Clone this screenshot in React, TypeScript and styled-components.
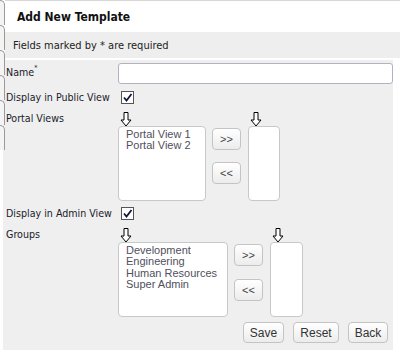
import React from "react";
import styled, { createGlobalStyle } from "styled-components";

const Global = createGlobalStyle`
  html, body { margin: 0; padding: 0; background: #fff; }
  body { font-family: "DejaVu Sans Condensed", "DejaVu Sans", sans-serif; }
`;

const Page = styled.div`
  position: relative;
  width: 400px;
  height: 353px;
  overflow: hidden;
  background: #fff;
`;

const TabStrip = styled.div`
  position: absolute;
  left: 0;
  top: 0;
  width: 5px;
  display: flex;
  flex-direction: column;
`;

const Tab = styled.div`
  width: 4px;
  height: 24px;
  border: 1px solid #9a9a9a;
  border-left: none;
  border-bottom: none;
  border-radius: 0 6px 0 0;
  background: #f4f4f4;
`;

const Header = styled.div`
  margin-left: 5px;
  height: 31px;
  border-top: 1px solid #d8d8d8;
  display: flex;
  align-items: center;
  padding-left: 12px;
  font-weight: bold;
  font-size: 12px;
  color: #111;
`;

const InfoBar = styled.div`
  margin-left: 5px;
  height: 26px;
  background: #eeeeee;
  display: flex;
  align-items: center;
  padding-left: 8px;
  font-size: 11px;
  color: #222;
`;

const Form = styled.div`
  margin: 2px 7px 0 3px;
  height: 290px;
  background: #efefef;
  display: flex;
  flex-direction: column;
  padding: 3px 0 0 3px;
  box-sizing: border-box;
`;

const Row = styled.div<{ $h: number }>`
  display: flex;
  align-items: flex-start;
  height: ${(p) => p.$h}px;
`;

const Label = styled.div<{ $top?: number }>`
  width: 112px;
  flex: none;
  font-size: 10.6px;
  color: #1a1a2a;
  padding-top: ${(p) => p.$top ?? 0}px;
`;

const Req = styled.sup`
  font-size: 7px;
  vertical-align: top;
  position: relative;
  top: -2px;
`;

const TextInput = styled.input`
  width: 275px;
  height: 21px;
  box-sizing: border-box;
  border: 1px solid #b4b1c0;
  border-radius: 3px;
  background: #fff;
  outline: none;
`;

const Check = styled.div`
  width: 11px;
  height: 11px;
  margin-left: 3px;
  border: 1px solid #555;
  background: #fff;
  display: flex;
  align-items: center;
  justify-content: center;
`;

const Picker = styled.div`
  display: flex;
  align-items: flex-start;
`;

const Column = styled.div`
  display: flex;
  flex-direction: column;
`;

const ArrowWrap = styled.div`
  height: 14px;
  padding-left: 2px;
  display: flex;
`;

const ListBox = styled.div<{ $w: number }>`
  width: ${(p) => p.$w}px;
  height: 75px;
  box-sizing: border-box;
  border: 1px solid #c8c8c8;
  border-radius: 4px;
  background: #fff;
  padding: 2px 7px;
  font-family: "Liberation Sans", Arial, sans-serif;
  font-size: 11px;
  line-height: 11.3px;
  color: #50505c;
`;

const MoveButtons = styled.div<{ $gap: number }>`
  display: flex;
  flex-direction: column;
  gap: ${(p) => p.$gap}px;
  margin: 16px 7px 0 6px;
`;

const Btn = styled.button<{ $w?: number }>`
  width: ${(p) => p.$w ?? 29}px;
  height: 22px;
  box-sizing: border-box;
  padding: 0;
  border: 1px solid #c4c4c4;
  border-radius: 4px;
  background: linear-gradient(#ffffff, #ececec);
  font-family: "Liberation Sans", Arial, sans-serif;
  font-size: 11px;
  color: #444;
`;

const Actions = styled.div`
  display: flex;
  justify-content: flex-end;
  gap: 9px;
  padding-right: 5px;
`;

const ActionBtn = styled(Btn)`
  height: 21px;
  font-size: 12px;
  color: #333;
`;

const Arrow = () => (
  <svg width="12" height="15" viewBox="0 0 12 15">
    <polygon
      points="4,0.5 8,0.5 8,8 11,8 6,14 1,8 4,8"
      fill="#fff"
      stroke="#000"
      strokeWidth="1"
    />
  </svg>
);

const Tick = () => (
  <svg width="11" height="11" viewBox="0 0 11 11">
    <path d="M2 5.5 L4.5 8.5 L9.5 2" fill="none" stroke="#10183a" strokeWidth="1.8" />
  </svg>
);

const PickerBlock: React.FC<{
  items: string[];
  w1: number;
  w2: number;
  gap: number;
}> = ({ items, w1, w2, gap }) => (
  <Picker>
    <Column>
      <ArrowWrap>
        <Arrow />
      </ArrowWrap>
      <ListBox $w={w1}>
        {items.map((i) => (
          <div key={i}>{i}</div>
        ))}
      </ListBox>
    </Column>
    <MoveButtons $gap={gap}>
      <Btn>&gt;&gt;</Btn>
      <Btn>&lt;&lt;</Btn>
    </MoveButtons>
    <Column>
      <ArrowWrap>
        <Arrow />
      </ArrowWrap>
      <ListBox $w={w2} />
    </Column>
  </Picker>
);

export default function App() {
  return (
    <Page>
      <Global />
      <TabStrip>
        {Array.from({ length: 6 }).map((_, i) => (
          <Tab key={i} />
        ))}
      </TabStrip>
      <Header>Add New Template</Header>
      <InfoBar>Fields marked by * are required</InfoBar>
      <Form>
        <Row $h={28}>
          <Label $top={3}>
            Name<Req>*</Req>
          </Label>
          <TextInput />
        </Row>
        <Row $h={21}>
          <Label $top={0}>Display in Public View</Label>
          <Check>
            <Tick />
          </Check>
        </Row>
        <Row $h={95}>
          <Label $top={0}>Portal Views</Label>
          <PickerBlock items={["Portal View 1", "Portal View 2"]} w1={88} w2={32} gap={12} />
        </Row>
        <Row $h={21}>
          <Label $top={0}>Display in Admin View</Label>
          <Check>
            <Tick />
          </Check>
        </Row>
        <Row $h={94}>
          <Label $top={0}>Groups</Label>
          <PickerBlock
            items={["Development", "Engineering", "Human Resources", "Super Admin"]}
            w1={110}
            w2={33}
            gap={13}
          />
        </Row>
        <Actions>
          <ActionBtn $w={41}>Save</ActionBtn>
          <ActionBtn $w={46}>Reset</ActionBtn>
          <ActionBtn $w={40}>Back</ActionBtn>
        </Actions>
      </Form>
    </Page>
  );
}
